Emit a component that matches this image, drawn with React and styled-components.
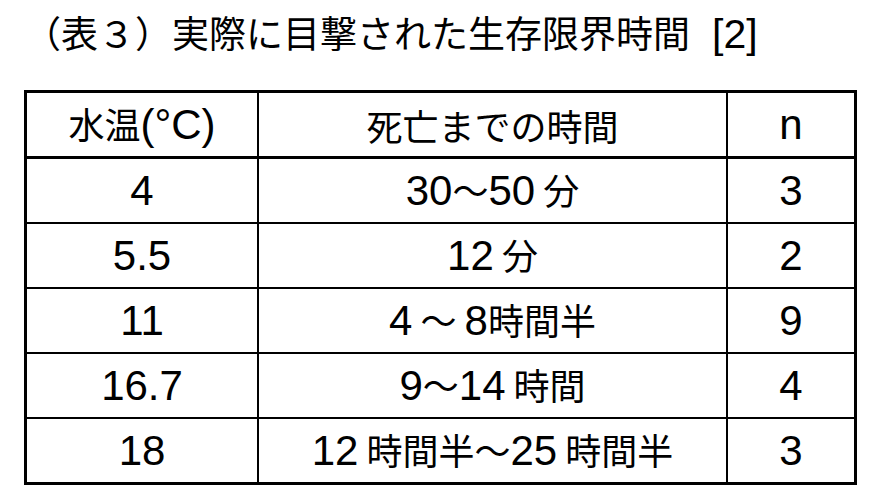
import styled, { createGlobalStyle } from 'styled-components'

const GlobalStyle = createGlobalStyle`
    html, body {
        margin: 0;
        padding: 0;
        background: #fff;
    }

    body {
        color: #000;
        font-family: "Noto Sans CJK JP", sans-serif;
    }
`

const Page = styled.div`
    width: 880px;
    height: 500px;
    padding: 8px 0 0 24px;
    box-sizing: border-box;
    overflow: hidden;
`

const Title = styled.h1`
    margin: 0 0 28px;
    font-family: "Liberation Sans", "Noto Sans CJK JP", sans-serif;
    font-size: 37px;
    font-weight: 400;
    line-height: 52px;
    white-space: nowrap;
`

const Ref = styled.span`
    margin-left: 22px;
    font-size: 41px;
`

const Table = styled.table`
    width: 833px;
    border: 3px solid #000;
    border-spacing: 0;
    table-layout: fixed;
    box-sizing: border-box;
`

const Row = styled.tr`
    height: ${ ( { $head, $last } ) => $head ? `66px` : $last ? `63px` : `65px` };
`

const Cell = styled.td`
    box-sizing: border-box;
    width: ${ ( { $col } ) => [ `232px`, `469px`, `126px` ][ $col ] };
    padding: 0;
    border-right: ${ ( { $col } ) => $col < 2 ? `2px solid #000` : `none` };
    border-bottom: ${ ( { $head, $last } ) => $head ? `3px solid #000` : $last ? `none` : `2px solid #000` };
    font-family: "Noto Sans CJK JP", sans-serif;
    font-size: 36px;
    font-weight: 400;
    line-height: 1;
    text-align: center;
    vertical-align: middle;
    white-space: nowrap;
`

const Latin = styled.span`
    font-family: "Liberation Sans", sans-serif;
    font-size: 42px;
`

const head = [ `水温(°C)`, `死亡までの時間`, `n` ]

const rows = [
    [ `4`, `30～50 分`, `3` ],
    [ `5.5`, `12 分`, `2` ],
    [ `11`, `4 ～ 8時間半`, `9` ],
    [ `16.7`, `9～14 時間`, `4` ],
    [ `18`, `12 時間半～25 時間半`, `3` ],
]

/**
 * Splits a label into latin and CJK runs so digits can be set larger.
 * @param {string} text - Cell text.
 * @returns {JSX.Element[]} Runs.
 */
function Mixed( { text } ) {

    return text.split( /([0-9A-Za-z.()°]+)/ ).map( ( part, index ) => index % 2
        ? <Latin key={ index }>{ part }</Latin>
        : part )
}

export default function App() {

    return <Page>
        <GlobalStyle />
        <Title>（表３）実際に目撃された生存限界時間<Ref>[2]</Ref></Title>
        <Table>
            <thead>
                <Row $head>
                    { head.map( ( label, col ) => <Cell as="th" key={ col } $col={ col } $head>
                        <Mixed text={ label } />
                    </Cell> ) }
                </Row>
            </thead>
            <tbody>
                { rows.map( ( row, index ) => {
                    const last = index === rows.length - 1

                    return <Row key={ index } $last={ last }>
                        { row.map( ( value, col ) => <Cell key={ col } $col={ col } $last={ last }>
                            <Mixed text={ value } />
                        </Cell> ) }
                    </Row>
                } ) }
            </tbody>
        </Table>
    </Page>
}
